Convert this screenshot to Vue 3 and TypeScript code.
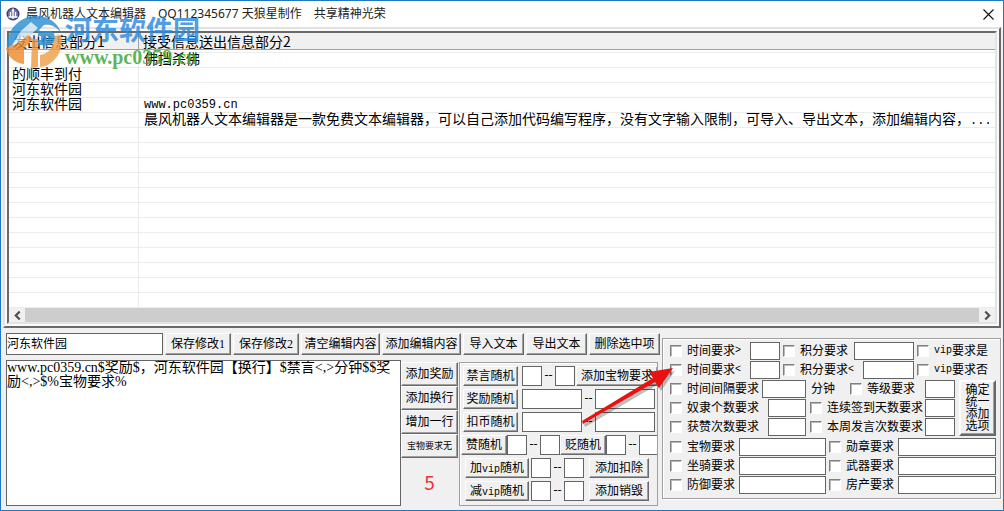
<script setup lang="ts">
import { ref } from 'vue'

interface Message {
  sent: string
  reply: string
  latin?: boolean
  clipped?: boolean
}

const TOTAL_ROWS = 17

const messages: Message[] = [
  { sent: '', reply: '佛挡杀佛' },
  { sent: '的顺丰到付', reply: '' },
  { sent: '河东软件园', reply: '' },
  { sent: '河东软件园', reply: 'www.pc0359.cn', latin: true },
  {
    sent: '',
    reply:
      '晨风机器人文本编辑器是一款免费文本编辑器，可以自己添加代码编写程序，没有文字输入限制，可导入、导出文本，添加编辑内容，',
    clipped: true,
  },
]

const rows: Message[] = Array.from(
  { length: TOTAL_ROWS },
  (_, i) => messages[i] ?? { sent: '', reply: '' },
)

const keyword = ref('河东软件园')
const content = ref('www.pc0359.cn$奖励$，河东软件园【换行】$禁言<,>分钟$$奖励<,>$%宝物要求%')
</script>

<template>
  <main class="window">
    <header class="titlebar">
      <svg class="app-icon" viewBox="0 0 14 14" aria-hidden="true">
        <circle cx="7" cy="7" r="6.5" fill="#34386f" />
        <circle cx="7" cy="7" r="5.2" fill="#6e74ad" />
        <path d="M7 1.5V12M4.5 5v4.5M9.5 5v4.5M2.5 10h9" stroke="#fff" stroke-width="1.3" fill="none" />
        <path d="M5.5 4.5L7 2l1.5 2.5z" fill="#fff" />
      </svg>
      <h1>晨风机器人文本编辑器　QQ112345677 天狼星制作　共享精神光荣</h1>
      <button class="close" type="button" aria-label="关闭">
        <svg viewBox="0 0 11 11"><path d="M.5.5l10 10M10.5.5l-10 10" stroke="#111" stroke-width="1.1" /></svg>
      </button>
    </header>

    <section class="frame">
      <div class="list">
        <table>
          <thead>
            <tr>
              <th class="col-sent" scope="col">发出信息部分1</th>
              <th scope="col">接受信息送出信息部分2</th>
            </tr>
          </thead>
          <tbody>
            <tr class="spacer" aria-hidden="true"><td></td><td></td></tr>
            <tr v-for="(row, i) in rows" :key="i">
              <td>{{ row.sent }}</td>
              <td :class="{ latin: row.latin }">{{ row.reply }}<span v-if="row.clipped" class="latin">...</span></td>
            </tr>
          </tbody>
        </table>
        <div class="scrollbar">
          <button type="button" aria-label="向左滚动">
            <svg viewBox="0 0 8 8"><path d="M6 .5L2.500 4 6 7.500" /></svg>
          </button>
          <div class="thumb"></div>
          <button type="button" aria-label="向右滚动">
            <svg viewBox="0 0 8 8"><path d="M2 .5L5.500 4 2 7.500" /></svg>
          </button>
        </div>
      </div>
    </section>

    <div class="lower">
      <section class="editor">
        <div class="toolbar">
          <input v-model="keyword" class="keyword" type="text" aria-label="发出信息" />
          <button class="b66" type="button">保存修改1</button>
          <button class="b66" type="button">保存修改2</button>
          <button class="b79" type="button">清空编辑内容</button>
          <button class="b79" type="button">添加编辑内容</button>
          <button class="b61" type="button">导入文本</button>
          <button class="b61" type="button">导出文本</button>
          <button class="b71" type="button">删除选中项</button>
        </div>

        <div class="work">
          <textarea v-model="content" aria-label="接受信息" spellcheck="false"></textarea>

          <div class="side">
            <button type="button">添加奖励</button>
            <button type="button">添加换行</button>
            <button type="button">增加一行</button>
            <button class="tiny" type="button">宝物要求无</button>
            <output>5</output>
          </div>

          <div class="random">
            <div class="line">
              <button class="b55" type="button">禁言随机</button>
              <input class="n20" type="text" aria-label="禁言最小" />
              <span class="dash">--</span>
              <input class="n20" type="text" aria-label="禁言最大" />
              <button class="b82" type="button">添加宝物要求</button>
            </div>
            <div class="line">
              <button class="b55" type="button">奖励随机</button>
              <input class="n60" type="text" aria-label="奖励最小" />
              <span class="dash">--</span>
              <input class="n60" type="text" aria-label="奖励最大" />
            </div>
            <div class="line">
              <button class="b55" type="button">扣币随机</button>
              <input class="n60" type="text" aria-label="扣币最小" />
              <span class="dash">--</span>
              <input class="n60" type="text" aria-label="扣币最大" />
            </div>
            <div class="line tight">
              <button class="b46" type="button">赞随机</button>
              <input class="n20" type="text" aria-label="赞最小" />
              <span class="dash">--</span>
              <input class="n20" type="text" aria-label="赞最大" />
              <button class="b46" type="button">贬随机</button>
              <input class="n20" type="text" aria-label="贬最小" />
              <span class="dash">--</span>
              <input class="n20" type="text" aria-label="贬最大" />
            </div>
            <div class="line inset">
              <button class="b64" type="button">加<span class="mono">vip</span>随机</button>
              <input class="n20" type="text" aria-label="加vip最小" />
              <span class="dash">--</span>
              <input class="n20" type="text" aria-label="加vip最大" />
              <button class="b60" type="button">添加扣除</button>
            </div>
            <div class="line inset">
              <button class="b64" type="button">减<span class="mono">vip</span>随机</button>
              <input class="n20" type="text" aria-label="减vip最小" />
              <span class="dash">--</span>
              <input class="n20" type="text" aria-label="减vip最大" />
              <button class="b60" type="button">添加销毁</button>
            </div>
          </div>
        </div>
      </section>

      <section class="rules">
        <div class="rule">
          <label class="o80"><input type="checkbox" />时间要求<span class="mono">&gt;</span></label>
          <input class="n30" type="text" aria-label="时间大于" />
          <div class="score">
            <label><input type="checkbox" />积分要求</label>
            <input class="n60" type="text" aria-label="积分大于" />
          </div>
          <label><input type="checkbox" /><span class="mono">vip</span>要求是</label>
        </div>
        <div class="rule">
          <label class="o80"><input type="checkbox" />时间要求<span class="mono">&lt;</span></label>
          <input class="n30" type="text" aria-label="时间小于" />
          <div class="score">
            <label><input type="checkbox" />积分要求<span class="mono">&lt;</span></label>
            <input class="n51" type="text" aria-label="积分小于" />
          </div>
          <label><input type="checkbox" /><span class="mono">vip</span>要求否</label>
        </div>

        <div class="middle">
          <div class="stack">
            <div class="rule">
              <label class="o92"><input type="checkbox" />时间间隔要求</label>
              <input class="n44" type="text" aria-label="时间间隔" />
              <span class="unit">分钟</span>
              <label class="push"><input type="checkbox" />等级要求</label>
              <input class="n30 end" type="text" aria-label="等级" />
            </div>
            <div class="rule">
              <label class="o98"><input type="checkbox" />奴隶个数要求</label>
              <input class="n38" type="text" aria-label="奴隶个数" />
              <label class="near"><input type="checkbox" />连续签到天数要求</label>
              <input class="n30 end" type="text" aria-label="连续签到天数" />
            </div>
            <div class="rule">
              <label class="o98"><input type="checkbox" />获赞次数要求</label>
              <input class="n38" type="text" aria-label="获赞次数" />
              <label class="near"><input type="checkbox" />本周发言次数要求</label>
              <input class="n30 end" type="text" aria-label="本周发言次数" />
            </div>
          </div>
          <button class="confirm" type="button">确定统一添加选项</button>
        </div>

        <div class="rule wide">
          <label class="o69"><input type="checkbox" />宝物要求</label>
          <input class="n87" type="text" aria-label="宝物" />
          <label class="o69"><input type="checkbox" />勋章要求</label>
          <input class="grow" type="text" aria-label="勋章" />
        </div>
        <div class="rule wide">
          <label class="o69"><input type="checkbox" />坐骑要求</label>
          <input class="n87" type="text" aria-label="坐骑" />
          <label class="o69"><input type="checkbox" />武器要求</label>
          <input class="grow" type="text" aria-label="武器" />
        </div>
        <div class="rule wide">
          <label class="o69"><input type="checkbox" />防御要求</label>
          <input class="n87" type="text" aria-label="防御" />
          <label class="o69"><input type="checkbox" />房产要求</label>
          <input class="grow" type="text" aria-label="房产" />
        </div>

        <svg class="arrow" viewBox="0 0 100 64" aria-hidden="true">
          <path class="shade" d="M95 7L71 11l4 6L4 60l1 3L77 21l4 6z" />
          <path class="fill" d="M93 4L69 8l4 6L2 57l1 3L75 18l4 6z" />
        </svg>
      </section>
    </div>

    <div class="watermark">
      <svg viewBox="0 0 58 56" aria-hidden="true">
        <path d="M2 34C1 18 12 4 29 2c13-1 24 6 27 17-5-7-11-9-17-8l-5 5 8 8v9l-6-6v-7l-6-3-8 7-6-1-8 8z" fill="#2b8fd3" />
        <path d="M16 17l10-9 7 6-15 14-11 3z" fill="#fff" opacity=".75" />
        <path d="M1 34l13-5 9-8 5 4-9 9v16C9 49 3 43 1 34z" fill="#ee8b33" />
        <path d="M27 25h6v28l-7 1z" fill="#ee9a45" />
        <path d="M56 21c3 13-3 25-15 31l-6 1V41c9-1 14-9 14-19z" fill="#f0a04a" />
        <path d="M33 17h12c6 0 7 13-1 14H33v-5h8c3 0 3-4 0-4h-8z" fill="#2b8fd3" />
      </svg>
      <div class="brand">
        <strong>河东软件园</strong>
        <span>www.pc0359.cn</span>
      </div>
    </div>
  </main>
</template>

<style>
body {
  margin: 0;
  background: #f0f0f0;
}
</style>

<style scoped>
.window {
  position: relative;
  box-sizing: border-box;
  min-width: 1004px;
  min-height: 100vh;
  border: 1px solid #1f78c4;
  background: #f0f0f0;
  color: #000;
  font: 12px/14px "Liberation Serif", "Noto Sans CJK SC", sans-serif;
}

.window *,
.window *::before {
  box-sizing: border-box;
}

button,
input,
textarea {
  margin: 0;
  padding: 0;
  border-radius: 0;
  font: inherit;
  color: inherit;
}

.mono {
  font: 10px/12px "Liberation Mono", monospace;
}

/* title bar */
.titlebar {
  display: flex;
  align-items: center;
  height: 26px;
  padding: 0 9px 0 5px;
  background: #fff;
}

.app-icon {
  width: 14px;
  height: 14px;
}

h1 {
  flex: 1;
  margin: 0 0 0 6px;
  color: #222;
  font: 12px/16px "Noto Sans", "Noto Sans CJK SC", sans-serif;
}

.close {
  display: flex;
  padding: 0;
  border: 0;
  background: none;
}

.close svg {
  width: 11px;
  height: 11px;
}

/* message list */
.frame {
  margin: 0 2px;
  padding: 2px;
  border: 2px solid;
  border-color: #e3e3e3 #696969 #696969 #e3e3e3;
  background: #fafafa;
}

.list {
  border: 2px solid;
  border-color: #696969 #e3e3e3 #e3e3e3 #696969;
  background: #fff;
}

table {
  width: 100%;
  border-collapse: separate;
  border-spacing: 0;
  table-layout: fixed;
  font-size: 14px;
}

th {
  height: 17px;
  padding: 0 4px;
  border-bottom: 1px solid #a0a0a0;
  background: #f0f0f0;
  font: 14px/16px "Noto Sans CJK SC", sans-serif;
  text-align: left;
}

.col-sent {
  width: 130px;
  border-right: 1px solid #a0a0a0;
}

td {
  height: 15px;
  padding: 0 0 0 3px;
  border-bottom: 1px solid #ececec;
  line-height: 14px;
  white-space: nowrap;
}

td:first-child {
  border-right: 1px solid #ececec;
}

td + td {
  padding-left: 5px;
}

.spacer td {
  height: 3px;
}

.latin {
  font: 12px/14px "Liberation Mono", monospace;
}

span.latin {
  line-height: 8px;
}

.scrollbar {
  display: flex;
  height: 14px;
  background: #f0f0f0;
}

.scrollbar button {
  display: flex;
  align-items: center;
  justify-content: center;
  width: 16px;
  border: 0;
  background: none;
}

.scrollbar svg {
  width: 9px;
  height: 9px;
  fill: none;
  stroke: #505050;
  stroke-width: 2;
}

.thumb {
  flex: 1;
  background: #cdcdcd;
}

/* lower area */
.lower {
  display: flex;
  gap: 2px;
  padding: 5px 2px 4px 5px;
}

.editor {
  flex: 1;
  display: flex;
  flex-direction: column;
  gap: 5px;
}

.editor button,
.confirm {
  flex: none;
  border: 1px solid;
  border-color: #fff #696969 #696969 #fff;
  background: #f0f0f0;
  box-shadow: inset -1px -1px #a0a0a0;
  white-space: nowrap;
}

input[type="text"],
textarea {
  border: 1px solid #646464;
  background: #fff;
  outline: 0;
}

.toolbar {
  display: flex;
  gap: 2px;
  height: 22px;
}

.keyword {
  flex: 1;
  min-width: 0;
}

.work {
  display: flex;
  padding-right: 2px;
}

textarea {
  flex: 1;
  min-width: 0;
  height: 146px;
  font-size: 14px;
  line-height: 14px;
  word-break: break-all;
  resize: none;
  overflow: hidden;
}

.side {
  display: flex;
  flex-direction: column;
  width: 58px;
  padding: 2px 1px 0 0;
}

.side button {
  height: 24px;
}

.side .tiny {
  font-size: 9px;
}

output {
  margin-top: 12px;
  color: #f03038;
  font: 19px/24px "Noto Sans CJK SC", sans-serif;
  text-align: center;
}

.random {
  display: flex;
  flex-direction: column;
  gap: 3px;
  width: 199px;
  margin-top: 2px;
  padding: 3px 0 2px 1px;
  overflow: hidden;
  border: 1px solid #a0a0a0;
  box-shadow: inset 1px 1px #fff;
}

.line {
  display: flex;
  height: 20px;
  padding-left: 2px;
}

.line > input {
  flex: none;
}

.tight {
  padding-left: 0;
}

.inset {
  padding-left: 4px;
}

.dash {
  flex: none;
  width: 13px;
  line-height: 18px;
  text-align: center;
}

.b46 { width: 46px; }
.b55 { width: 55px; }
.b60 { width: 60px; }
.b61 { width: 61px; }
.b64 { width: 64px; }
.b66 { width: 66px; }
.b71 { width: 71px; }
.b79 { width: 79px; }
.b82 { width: 82px; }

.b55 { margin-right: 4px; }
.b64 { margin-right: 2px; }
.line .b60 { margin-left: 5px; }
.line .b82 { margin-left: 1px; }

.n20 { width: 20px; }
.n30 { width: 30px; }
.n38 { width: 38px; }
.n44 { width: 44px; }
.n51 { width: 51px; }
.n60 { width: 60px; }
.n87 { width: 87px; }

/* requirement options */
.rules {
  position: relative;
  display: flex;
  flex-direction: column;
  gap: 1px;
  align-self: flex-start;
  width: 339px;
  margin-top: 5px;
  padding: 3px 4px 4px 7px;
  border: 1px solid #a0a0a0;
  box-shadow: inset 1px 1px #fff, 1px 1px #fff;
}

.rule {
  display: flex;
  align-items: center;
  height: 18px;
}

.rule input[type="text"] {
  height: 18px;
}

label {
  display: flex;
  flex: none;
  align-items: center;
  white-space: nowrap;
}

input[type="checkbox"] {
  width: 12px;
  height: 12px;
  margin-right: 5px;
  appearance: none;
  border: 1px solid;
  border-color: #808080 #fff #fff #808080;
  background: #fff;
  box-shadow: inset 1px 1px #b8b8b8;
}

.score {
  display: flex;
  justify-content: space-between;
  width: 131px;
  margin: 0 3px;
}

.middle {
  display: flex;
  gap: 4px;
  margin-bottom: 1px;
}

.stack {
  display: flex;
  flex: 1;
  flex-direction: column;
  gap: 1px;
}

.unit { margin-left: 5px; }
.push { margin-left: 15px; }
.near { margin-left: 4px; }
.end { margin-left: auto; }

.o69 { width: 69px; }
.o80 { width: 80px; }
.o92 { width: 92px; }
.o98 { width: 98px; }

.wide .n87 { margin-right: 3px; }

.grow {
  flex: 1;
  min-width: 0;
}

.confirm {
  width: 37px;
  padding: 0 4px;
  border-width: 2px;
  line-height: 12px;
  white-space: normal;
  word-break: break-all;
}

.arrow {
  position: absolute;
  top: 25px;
  left: -83px;
  width: 100px;
  height: 64px;
  pointer-events: none;
}

.shade {
  fill: #000;
  opacity: 0.25;
}

.fill {
  fill: #ea1210;
}

/* site mark over the list */
.watermark {
  position: absolute;
  top: 13px;
  left: 4px;
  display: flex;
  gap: 2px;
  opacity: 0.82;
  pointer-events: none;
}

.watermark svg {
  width: 58px;
  height: 56px;
}

.brand {
  display: flex;
  flex-direction: column;
}

.brand strong {
  color: #2a8be0;
  font: bold 27px/30px "Noto Sans CJK SC", sans-serif;
}

.brand span {
  color: #3aa635;
  font: bold 20px/26px "Liberation Serif", serif;
}
</style>
